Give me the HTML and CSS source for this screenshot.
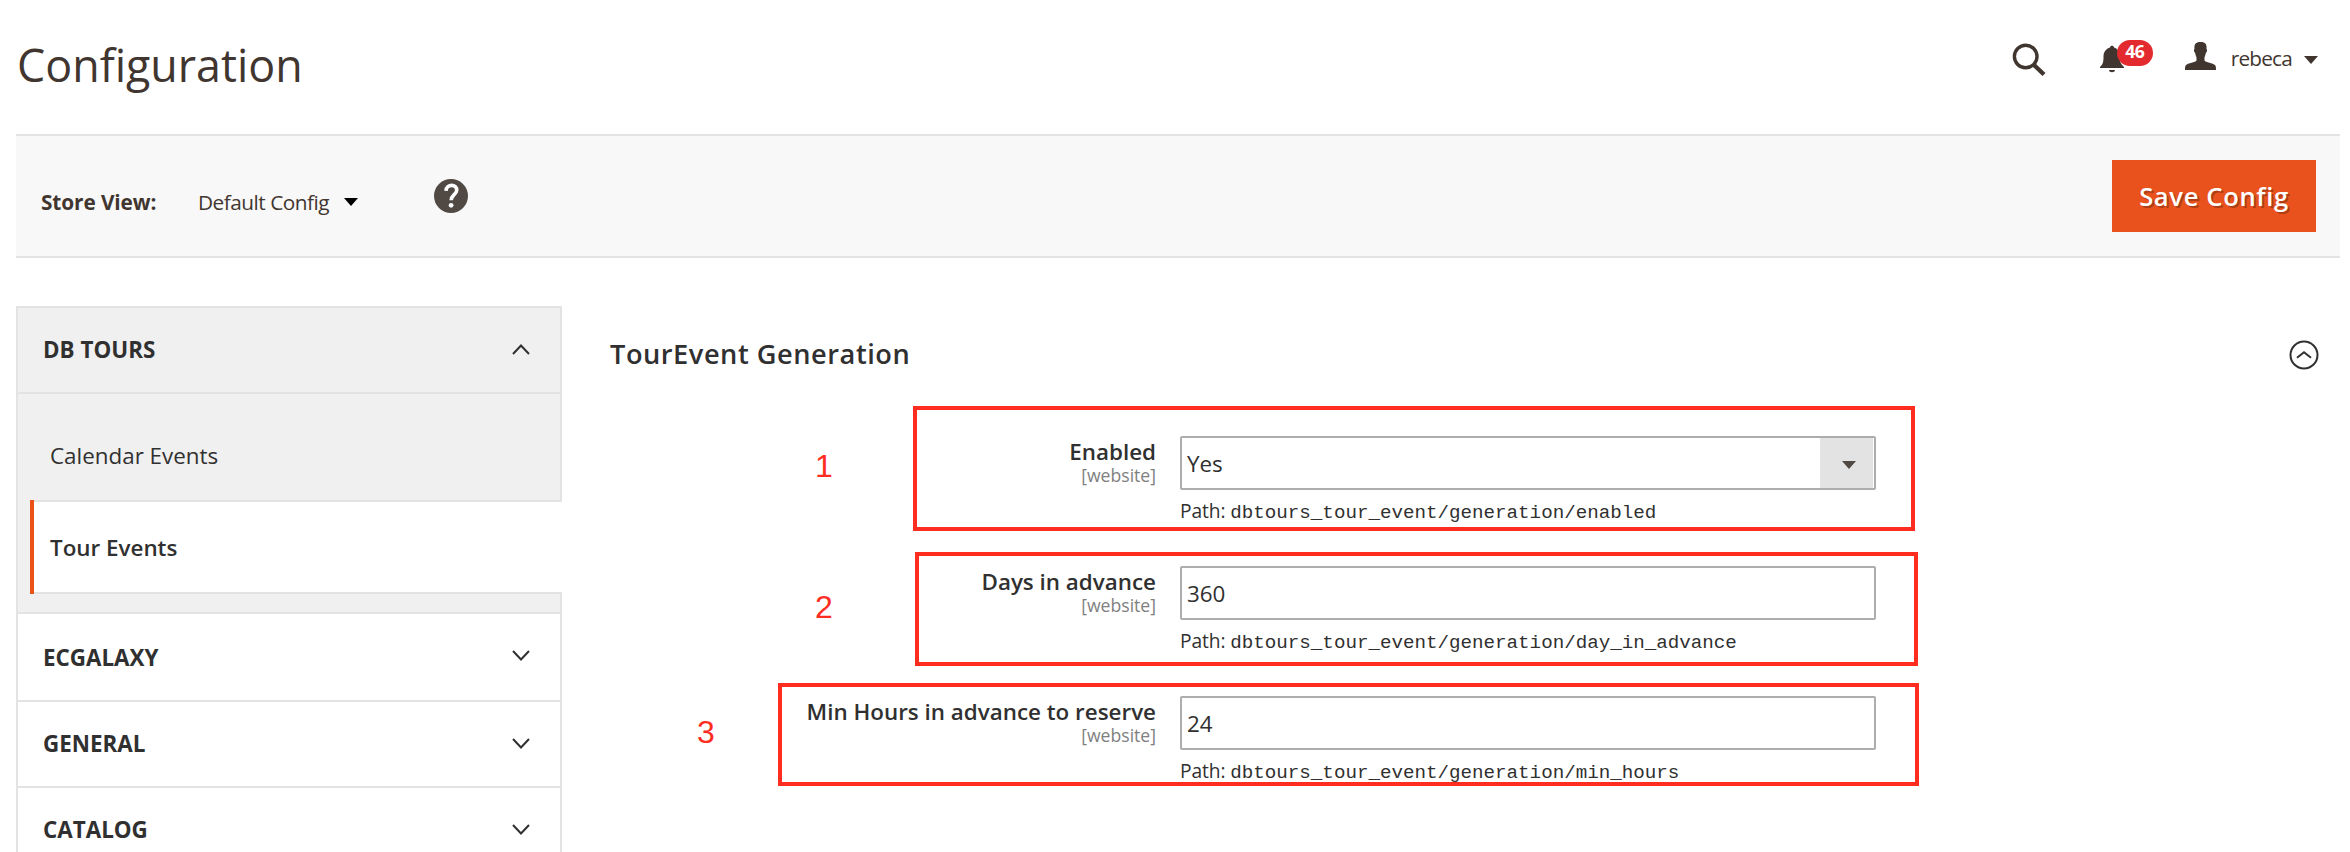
FILE: index.html
```html
<!DOCTYPE html>
<html lang="en">
<head>
<meta charset="utf-8">
<title>Configuration</title>
<link rel="stylesheet" href="styles.css">
</head>
<body>
<header class="page-header">
  <h1 class="page-title">Configuration</h1>
  <div class="header-tools">
    <svg class="icon-search" width="34" height="34" viewBox="0 0 34 34"><circle cx="13.700" cy="13.500" r="11.300" fill="none" stroke="currentColor" stroke-width="3.400"/><path d="M22 22l10 9.500" stroke="currentColor" stroke-width="4.400" fill="none"/></svg>
    <div class="notifications">
      <svg width="24" height="28" viewBox="0 0 24 28"><path fill="currentColor" d="M10 2.500C10 .2 14 .2 14 2.500c4 1.200 5.500 4.500 5.500 9 0 4 1 7.500 4.500 10.500v1H0v-1c3.500-3 3.500-6.500 3.500-10.500 0-4.500 2.500-7.800 6.500-9zM9 25h6c0 3-6 3-6 0z"/></svg>
      <span class="badge">46</span>
    </div>
    <div class="user">
      <svg width="31" height="28" viewBox="0 0 31 28"><path fill="currentColor" d="M15.500 0c5 0 6.500 2.500 6 7 .9.300.7 3-.6 3.800-.4 2.200-1 3.500-1.400 4.700v3c1 1.800 8.500 2.500 10.700 4.700.8 1 .8 3 .8 4.800H0c0-1.800 0-3.800.8-4.800 2.200-2.200 9.700-2.900 10.700-4.700v-3c-.4-1.200-1-2.500-1.400-4.700C8.800 10 8.600 7.300 9.500 7 9 2.500 10.500 0 15.500 0z"/></svg>
      <span class="user-name">rebeca</span>
      <i class="caret"></i>
    </div>
  </div>
</header>

<section class="actions-bar">
  <strong class="store-label">Store View:</strong>
  <span class="store-value">Default Config</span>
  <i class="caret caret-black"></i>
  <svg class="icon-help" width="34" height="34" viewBox="0 0 34 34"><circle cx="17" cy="17" r="17" fill="#514943"/><path d="M12 11.800c.4-7.400 11.200-7 10.700-.4-.3 4.300-5.500 4.500-5.500 9.800" fill="none" stroke="#fff" stroke-width="3.600"/><circle cx="17.100" cy="26.300" r="2.400" fill="#fff"/></svg>
  <button class="save">Save Config</button>
</section>

<main class="content">
  <nav class="sidebar">
    <div class="tab tab-open"><span>DB TOURS</span><svg width="18" height="11" viewBox="0 0 18 11"><path d="M1 10l8-8.500 8 8.500"/></svg></div>
    <div class="tab-items">
      <a class="item">Calendar Events</a>
      <a class="item item-active">Tour Events</a>
    </div>
    <div class="tab tab-first"><span>ECGALAXY</span><svg width="18" height="11" viewBox="0 0 18 11"><path d="M1 1l8 8.500 8-8.500"/></svg></div>
    <div class="tab"><span>GENERAL</span><svg width="18" height="11" viewBox="0 0 18 11"><path d="M1 1l8 8.500 8-8.500"/></svg></div>
    <div class="tab"><span>CATALOG</span><svg width="18" height="11" viewBox="0 0 18 11"><path d="M1 1l8 8.500 8-8.500"/></svg></div>
  </nav>
  <section class="panel">
    <div class="panel-head">
      <h2>TourEvent Generation</h2>
      <svg width="30" height="30" viewBox="0 0 30 30"><circle cx="15" cy="15" r="13.500"/><path d="M8 17.800l7-5.600 7 5.600"/></svg>
    </div>
    <div class="field">
      <div class="label"><b>Enabled</b><small>[website]</small></div>
      <div class="control">
        <div class="input select"><span>Yes</span><span class="select-btn"><i class="caret"></i></span></div>
        <p class="path">Path: <code>dbtours_tour_event/generation/enabled</code></p>
      </div>
    </div>
    <div class="field">
      <div class="label"><b>Days in advance</b><small>[website]</small></div>
      <div class="control">
        <div class="input">360</div>
        <p class="path">Path: <code>dbtours_tour_event/generation/day_in_advance</code></p>
      </div>
    </div>
    <div class="field">
      <div class="label"><b>Min Hours in advance to reserve</b><small>[website]</small></div>
      <div class="control">
        <div class="input">24</div>
        <p class="path">Path: <code>dbtours_tour_event/generation/min_hours</code></p>
      </div>
    </div>
  </section>
</main>

<div class="mark mark-1"></div>
<div class="mark mark-2"></div>
<div class="mark mark-3"></div>
<span class="num num-1">1</span>
<span class="num num-2">2</span>
<span class="num num-3">3</span>
</body>
</html>
```
FILE: styles.css
```css
* { box-sizing: border-box; }
body {
  margin: 0;
  position: relative;
  width: 2350px;
  height: 852px;
  overflow: hidden;
  background: #fff;
  color: #303030;
  font-family: "Open Sans", sans-serif;
  font-size: 22.4px;
}
h1, h2, p { margin: 0; }
svg { display: block; flex: none; }

.page-header {
  display: flex;
  justify-content: space-between;
  height: 134px;
  padding: 0 32px 0 17px;
  color: #41362f;
}
.page-title {
  padding-top: 35px;
  font-size: 44.8px;
  font-weight: 400;
  line-height: 60px;
}
.header-tools { display: flex; align-items: flex-start; }
.icon-search { margin: 43px 54px 0 0; }
.notifications { position: relative; width: 53px; margin: 45px 32px 0 0; }
.badge {
  position: absolute;
  left: 17px;
  top: -5px;
  width: 36px;
  height: 26px;
  border-radius: 13px;
  background: #e22a2f;
  color: #fff;
  font-size: 17.6px;
  font-weight: 700;
  line-height: 23px;
  letter-spacing: -.5px;
  text-align: center;
}
.user { display: flex; padding-top: 42px; }
.user-name { margin: 2px 12px 0 15px; font-size: 20.8px; line-height: 28px; letter-spacing: -.8px; }
.caret {
  flex: none;
  width: 14px;
  height: 8px;
  margin-top: 14px;
  background: currentColor;
  clip-path: polygon(0 0, 100% 0, 50% 100%);
}

.actions-bar {
  display: flex;
  height: 124px;
  margin: 0 10px 0 16px;
  padding: 0 24px 0 25px;
  border-top: 2px solid #e3e3e3;
  border-bottom: 2px solid #e3e3e3;
  background: #f8f8f8;
  color: #41362f;
  font-size: 20.8px;
  line-height: 28px;
}
.store-label { width: 157px; padding-top: 52px; letter-spacing: -.1px; }
.store-value { width: 146px; padding-top: 52px; white-space: nowrap; letter-spacing: -.5px; }
.caret-black { margin-top: 62px; background: #000; }
.icon-help { margin: 43px 0 0 76px; }
.save {
  width: 204px;
  height: 72px;
  margin: 24px 0 0 auto;
  padding: 0;
  border: 0;
  background: #e9521d;
  color: #fff;
  font: 600 25.6px/73px "Open Sans", sans-serif;
  letter-spacing: .64px;
  text-shadow: 2px 2px 0 rgba(0, 0, 0, .25);
}

.content { display: flex; padding: 48px 30px 0 16px; }
.sidebar { width: 546px; height: 546px; flex: none; border-top: 2px solid #e3e3e3; }
.tab {
  display: flex;
  justify-content: space-between;
  height: 86px;
  padding: 26px 30px 0 25px;
  border: 2px solid #e3e3e3;
  border-top: 0;
  font-weight: 700;
  line-height: 32px;
}
.tab svg { margin-top: 10px; fill: none; stroke: #303030; stroke-width: 2; }
.tab-open { background: #f0f0f0; }
.tab-first { height: 88px; padding-top: 28px; }
.tab-first svg { margin-top: 8px; }
.tab-items {
  height: 220px;
  padding-top: 30px;
  border: 2px solid #e3e3e3;
  border-top: 0;
  background: #f0f0f0;
}
.item { display: block; height: 76px; padding: 16px 0 0 32px; line-height: 32px; }
.item-active {
  height: 94px;
  margin: 0 -2px 0 12px;
  padding: 32px 0 0 20px;
  background: #fff;
  box-shadow: inset 4px 0 0 #eb5217, inset 0 2px 0 #e3e3e3, inset 0 -2px 0 #e3e3e3;
  font-weight: 600;
}

.panel { flex: 1; padding: 26px 0 0 48px; }
.panel-head { display: flex; justify-content: space-between; height: 104px; margin-right: 1px; }
.panel-head h2 { font-size: 27.2px; font-weight: 600; line-height: 44px; letter-spacing: .54px; }
.panel-head svg { margin-top: 8px; fill: none; stroke: #303030; stroke-width: 2; }
.field { display: flex; height: 130px; }
.label { width: 546px; flex: none; padding-top: 1px; text-align: right; white-space: nowrap; }
.label b { display: block; font-weight: 600; line-height: 30px; }
.label small { display: block; margin-top: -2px; color: #808080; font-size: 17.6px; line-height: 20px; }
.control { width: 696px; margin-left: 24px; }
.input {
  height: 54px;
  padding-left: 5px;
  border: 2px solid #adadad;
  border-radius: 2px;
  line-height: 52px;
}
.select { display: flex; justify-content: space-between; padding-right: 1px; }
.select-btn { width: 53px; background: #e3e3e3; color: #514943; padding-left: 22px; }
.select-btn .caret { display: block; margin-top: 23px; }
.path { font-size: 19.2px; line-height: 26px; padding-top: 8px; white-space: nowrap; letter-spacing: -.1px; }
.path code { font-family: "Liberation Mono", monospace; font-size: 19.2px; letter-spacing: 0; }

.mark { position: absolute; border: 4px solid #ff2d1f; }
.mark-1 { left: 913px; top: 406px; width: 1002px; height: 125px; }
.mark-2 { left: 915px; top: 552px; width: 1003px; height: 114px; }
.mark-3 { left: 778px; top: 683px; width: 1141px; height: 103px; }
.num { position: absolute; color: #ff2d1f; font: 32px/36px "Liberation Sans", sans-serif; }
.num-1 { left: 815px; top: 448px; }
.num-2 { left: 815px; top: 589px; }
.num-3 { left: 697px; top: 714px; }
```
